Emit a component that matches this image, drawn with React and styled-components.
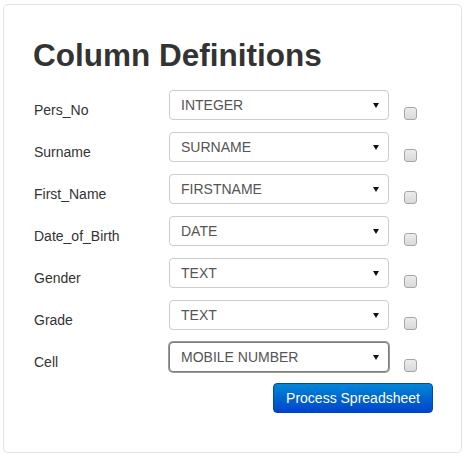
import styled, { createGlobalStyle } from "styled-components";

const GlobalStyle = createGlobalStyle`
  html, body {
    margin: 0;
    padding: 0;
    background: #fff;
    font-family: "Liberation Sans", Arial, Helvetica, sans-serif;
  }
`

const Card = styled.div`
  box-sizing: border-box;
  width: 459px;
  height: 449px;
  margin: 4px 0 0 3px;
  padding: 32px 28px 0 30px;
  border: 1px solid #e3e3e3;
  border-radius: 5px;
  display: flex;
  flex-direction: column;
`

const Title = styled.h1`
  margin: 0 0 17px -1px;
  font-size: 31.5px;
  line-height: 36px;
  font-weight: bold;
  color: #333;
`

const Form = styled.div`
  display: flex;
  flex-direction: column;
  gap: 12px;
`

const Row = styled.div`
  display: flex;
  align-items: flex-start;
  height: 30px;
`

const Label = styled.div`
  width: 135px;
  margin-top: 10px;
  font-size: 14px;
  line-height: 20px;
  color: #333;
`

const SelectBox = styled.div`
  box-sizing: border-box;
  width: 220px;
  height: 30px;
  display: flex;
  align-items: center;
  justify-content: space-between;
  padding: 0 9px 0 11px;
  border: 1px solid ${(props) => (props.focused ? "#7d7d7d" : "#ccc")};
  box-shadow: ${(props) => (props.focused ? "0 0 0 1px #9a9a9a" : "none")};
  border-radius: 4px;
  background: #fff;
  font-size: 14px;
  color: #555;
`

const Arrow = styled.svg`
  width: 6px;
  height: 5px;
  display: block;
`

const Check = styled.div`
  box-sizing: border-box;
  width: 13px;
  height: 13px;
  margin: 17px 0 0 15px;
  border: 1px solid #a6a6a6;
  border-radius: 3px;
  background: linear-gradient(#ececec, #d9d9d9);
`

const Footer = styled.div`
  display: flex;
  justify-content: flex-end;
  margin-top: 11px;
`

const Button = styled.button`
  box-sizing: border-box;
  width: 160px;
  height: 30px;
  padding: 0;
  border: 1px solid #0046b8;
  border-radius: 4px;
  background: linear-gradient(#0088d4, #0044cc);
  color: #fff;
  font-family: "Liberation Sans", Arial, sans-serif;
  font-size: 14px;
  cursor: pointer;
`

const rows = [
  ["Pers_No", "INTEGER"],
  ["Surname", "SURNAME"],
  ["First_Name", "FIRSTNAME"],
  ["Date_of_Birth", "DATE"],
  ["Gender", "TEXT"],
  ["Grade", "TEXT"],
  ["Cell", "MOBILE NUMBER"],
]

const App = () => {
  return (
    <>
      <GlobalStyle />
      <Card>
        <Title>Column Definitions</Title>
        <Form>
          {rows.map(([label, type], i) => (
            <Row key={label}>
              <Label>{label}</Label>
              <SelectBox focused={i === rows.length - 1}>
                <span>{type}</span>
                <Arrow viewBox="0 0 6 5">
                  <polygon points="0,0 6,0 3,5" fill="#111" />
                </Arrow>
              </SelectBox>
              <Check />
            </Row>
          ))}
        </Form>
        <Footer>
          <Button>Process Spreadsheet</Button>
        </Footer>
      </Card>
    </>
  );
}

export default App;
